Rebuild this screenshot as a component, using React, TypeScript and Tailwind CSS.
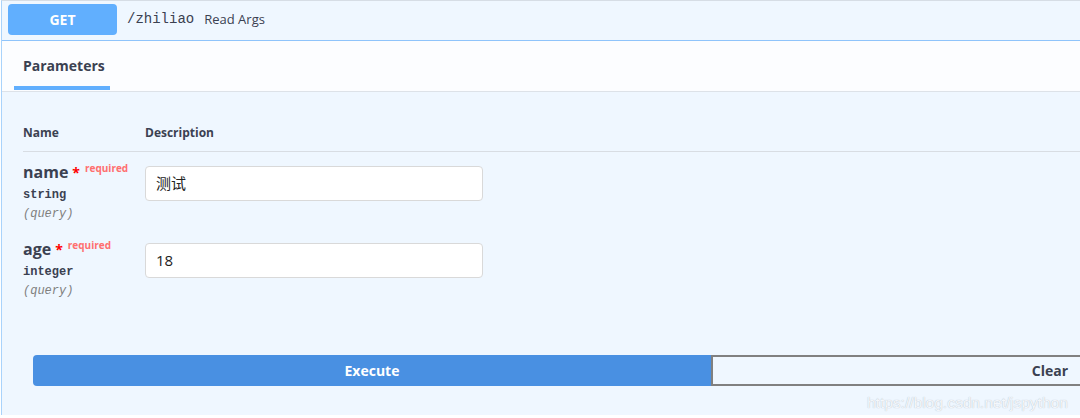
import React from "react";

const sans = "font-['Open_Sans','Noto_Sans','Noto_Sans_CJK_SC',sans-serif]";
const mono = "font-['Liberation_Mono','DejaVu_Sans_Mono',monospace]";

function ParamRow({ name, type, value }: { name: string; type: string; value: string }) {
  return (
    <div className="flex h-[77px]">
      <div className="w-[122px] pt-[10px] shrink-0">
        <div className={`${sans} text-[16px] leading-[20px] font-bold text-[#3b4151] whitespace-nowrap`}>
          {name}
          <span className="text-[#ff0000] text-[14px] ml-[4px]">*</span>
          <span className="text-[10px] font-bold text-[#ff6f6f] relative top-[-6px] pl-[5px]">required</span>
        </div>
        <div className={`${mono} mt-[2px] text-[12px] leading-[19px] font-bold text-[#3b4151]`}>{type}</div>
        <div className={`${mono} text-[12px] leading-[19px] italic text-[#808080]`}>(query)</div>
      </div>
      <div className="pt-[14px]">
        <div
          className={`${sans} w-[338px] h-[35px] bg-white border border-[#d9d9d9] rounded-[4px] pl-[10px] flex items-center text-[15px] text-[#222]`}
        >
          {value}
        </div>
      </div>
    </div>
  );
}

export default function App() {
  return (
    <div className="w-[1080px] h-[418px] overflow-hidden bg-white relative">
      <div className="w-[1420px] h-[415px] ml-[1px] border-l border-t border-l-[#a9d3fb] border-t-[#d6dde5] bg-[#eff7ff]">
        {/* summary */}
        <div className="h-[40px] border-b border-[#8fc4fb] flex items-start pt-[3px] pl-[6px]">
          <div
            className={`${sans} w-[109px] h-[31px] rounded-[4px] bg-[#61affe] text-white font-bold text-[14px] flex items-center justify-center`}
          >
            GET
          </div>
          <div className="h-[31px] flex items-center">
            <span className={`${mono} ml-[10px] text-[14px] text-[#3b4151]`}>/zhiliao</span>
            <span className={`${sans} ml-[10px] text-[13px] text-[#3b4151]`}>Read Args</span>
          </div>
        </div>
        {/* tab header */}
        <div className="h-[51px] bg-[#fcfdff] border-b border-[#dde2e8] pl-[12px] flex">
          <div className="relative h-full w-[96px] pl-[9px] flex items-center">
            <span className={`${sans} text-[14px] font-bold text-[#3b4151] -mt-[2px] whitespace-nowrap`}>Parameters</span>
            <div className="absolute left-0 right-0 bottom-[1px] h-[4px] bg-[#61affe]" />
          </div>
        </div>
        {/* table */}
        <div className="pl-[21px] pt-[22px]">
          <div className="h-[38px] flex items-center border-b border-[#d8dde3]">
            <div className={`${sans} w-[122px] text-[12px] font-bold text-[#3b4151]`}>Name</div>
            <div className={`${sans} text-[12px] font-bold text-[#3b4151]`}>Description</div>
          </div>
          <ParamRow name="name" type="string" value="测试" />
          <ParamRow name="age" type="integer" value="18" />
        </div>
        {/* buttons */}
        <div className="flex pl-[31px] mt-[49px]">
          <div
            className={`${sans} w-[678px] h-[31px] bg-[#4990e2] rounded-l-[4px] text-white font-bold text-[14px] flex items-center justify-center`}
          >
            Execute
          </div>
          <div
            className={`${sans} w-[678px] h-[31px] border-2 border-[#808080] rounded-r-[4px] text-[#3b4151] font-bold text-[14px] flex items-center justify-center`}
          >
            Clear
          </div>
        </div>
      </div>
      <div className="absolute left-[867px] top-[391px] font-['Liberation_Sans',Arial,sans-serif] text-[15.5px] text-[#f4f7fb] [text-shadow:0_0_1px_#a8b2bd]">
        https://blog.csdn.net/jspython
      </div>
    </div>
  );
}
